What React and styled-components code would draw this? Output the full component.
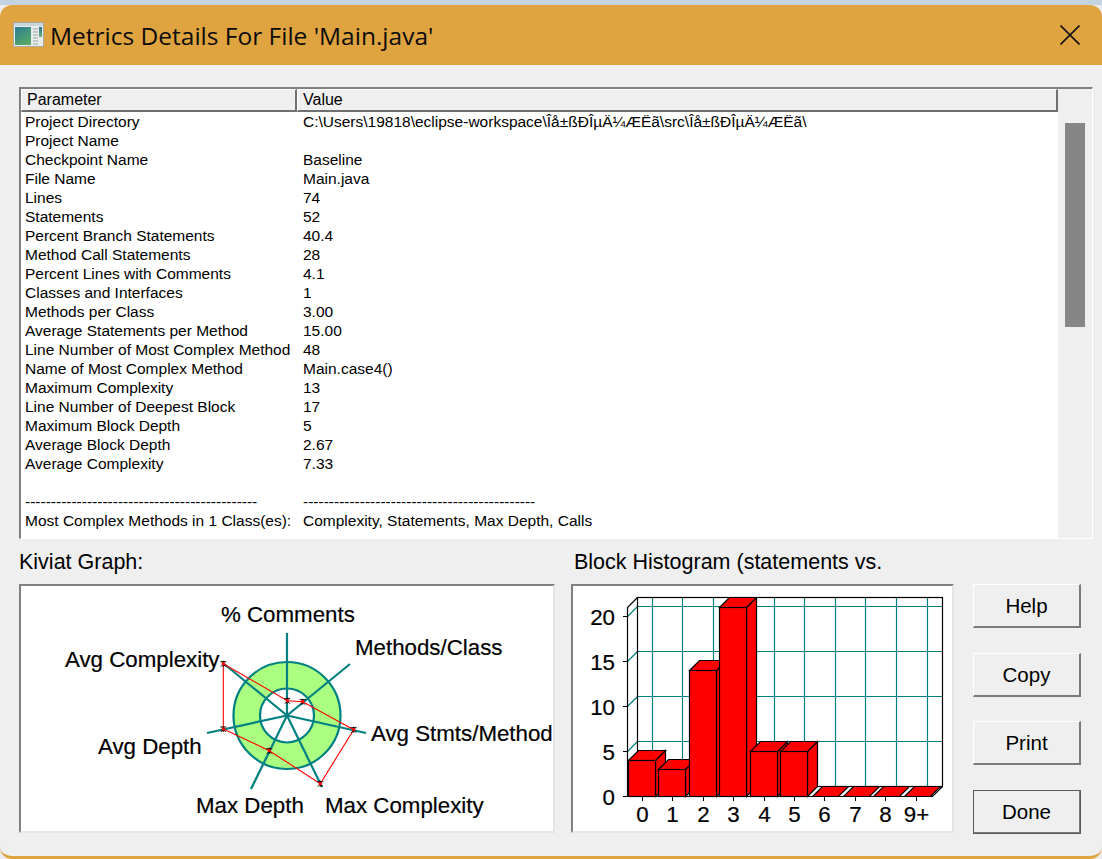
import React from "react";
import styled, { createGlobalStyle } from "styled-components";

const GlobalStyle = createGlobalStyle`
  html, body {
    margin: 0;
    padding: 0;
    height: 859px;
    overflow: hidden;
    background: linear-gradient(#c4d3e0 0 5px, #ececec 5px);
    font-family: "Liberation Sans", Arial, sans-serif;
  }
`;

const Window = styled.div`
  margin-top: 5px;
  width: 1102px;
  height: 854px;
  box-sizing: border-box;
  background: #efefef;
  border-bottom: 3px solid #dfa340;
  border-radius: 12px;
  overflow: hidden;
  display: flex;
  flex-direction: column;
`;

const TitleBar = styled.div`
  height: 60px;
  flex: none;
  background: #dfa340;
  display: flex;
  align-items: center;
  padding: 0 22px 0 13px;
  gap: 5px;
`;

const Title = styled.div`
  flex: 1;
  font-family: "Open Sans", sans-serif;
  font-size: 24.5px;
  color: #0c0c0c;
`;

const Body = styled.div`
  flex: 1;
  padding: 22px 21px 0 19px;
  display: flex;
  flex-direction: column;
`;

const ListBox = styled.div`
  width: 1074px;
  height: 452px;
  box-sizing: border-box;
  border-top: 2px solid #808080;
  border-left: 2px solid #808080;
  border-right: 1px solid #fff;
  border-bottom: 1px solid #fff;
  display: flex;
`;

const ListMain = styled.div`
  width: 1037px;
  background: #fff;
  overflow: hidden;
`;

const ScrollTrack = styled.div`
  flex: 1;
  background: #efefef;
  padding: 34px 7px 0 7px;
`;

const ScrollThumb = styled.div`
  height: 204px;
  background: #868686;
`;

const HeaderRow = styled.div`
  display: grid;
  grid-template-columns: 276px 761px;
  height: 22px;
`;

const HeaderCell = styled.div`
  box-sizing: border-box;
  background: #efefef;
  border-top: 1px solid #fff;
  border-left: 1px solid #fff;
  border-right: 2px solid #707070;
  border-bottom: 2px solid #707070;
  padding-left: ${(p) => p.$pad}px;
  font-size: 16px;
  line-height: 20px;
  color: #000;
`;

const Rows = styled.div`
  padding-top: 1px;
`;

const Row = styled.div`
  display: grid;
  grid-template-columns: 278px 1fr;
  height: 19px;
  line-height: 19px;
  padding-left: 4px;
  font-size: 15.5px;
  color: #000;
  white-space: nowrap;
`;

const Lower = styled.div`
  display: flex;
  margin-top: 0;
`;

const GraphColumn = styled.div`
  width: ${(p) => p.$width}px;
  margin-right: ${(p) => p.$gap}px;
`;

const GraphLabel = styled.div`
  height: 45px;
  line-height: 46px;
  font-size: 21.5px;
  color: #000;
  white-space: nowrap;
  padding-left: ${(p) => p.$pad || 0}px;
`;

const GraphPanel = styled.div`
  height: 249px;
  box-sizing: border-box;
  background: #fff;
  border-top: 2px solid #808080;
  border-left: 2px solid #808080;
  border-right: 2px solid #e4e4e4;
  border-bottom: 2px solid #e4e4e4;
  svg {
    display: block;
  }
`;

const ButtonColumn = styled.div`
  width: 108px;
  padding-top: 45px;
  height: 250px;
  display: flex;
  flex-direction: column;
  justify-content: space-between;
`;

const Button = styled.button`
  width: 108px;
  height: 44px;
  box-sizing: border-box;
  padding: 1px 0 0;
  background: #efefef;
  border-top: 1px solid #fff;
  border-left: 1px solid #fff;
  border-right: 2px solid #7a7a7a;
  border-bottom: 2px solid #7a7a7a;
  outline: ${(p) => (p.$default ? "1px solid #5a5a5a" : "none")};
  outline-offset: -1px;
  font-family: "Liberation Sans", Arial, sans-serif;
  font-size: 20.5px;
  color: #000;
`;

const ChartText = styled.text`
  font-family: "Liberation Sans", Arial, sans-serif;
  font-size: 22.3px;
  fill: #000;
  stroke: #000;
  stroke-width: 0.2px;
`;

const rows = [
  ["Project Directory", "C:\\Users\\19818\\eclipse-workspace\\Îå±ßÐÎµÄ¼ÆËã\\src\\Îå±ßÐÎµÄ¼ÆËã\\"],
  ["Project Name", ""],
  ["Checkpoint Name", "Baseline"],
  ["File Name", "Main.java"],
  ["Lines", "74"],
  ["Statements", "52"],
  ["Percent Branch Statements", "40.4"],
  ["Method Call Statements", "28"],
  ["Percent Lines with Comments", "4.1"],
  ["Classes and Interfaces", "1"],
  ["Methods per Class", "3.00"],
  ["Average Statements per Method", "15.00"],
  ["Line Number of Most Complex Method", "48"],
  ["Name of Most Complex Method", "Main.case4()"],
  ["Maximum Complexity", "13"],
  ["Line Number of Deepest Block", "17"],
  ["Maximum Block Depth", "5"],
  ["Average Block Depth", "2.67"],
  ["Average Complexity", "7.33"],
  ["", ""],
  ["-".repeat(45), "-".repeat(45)],
  ["Most Complex Methods in 1 Class(es):", "Complexity, Statements, Max Depth, Calls"],
];

const TEAL = "#008080";

const axes = [
  [287, 633],
  [350, 664],
  [366, 733],
  [322, 787],
  [251, 789],
  [207, 733],
  [223, 663],
];

const points = [
  [223.3, 663.7],
  [287.3, 700.7],
  [302.7, 701.7],
  [353.7, 729.7],
  [320.3, 783.7],
  [269.3, 750.7],
  [223.3, 729],
];

const kiviatLabels = [
  ["% Comments", 221, 622],
  ["Methods/Class", 355, 655],
  ["Avg Complexity", 65, 667],
  ["Avg Stmts/Method", 371, 741],
  ["Avg Depth", 98, 754],
  ["Max Depth", 196, 813],
  ["Max Complexity", 325, 813],
];

const Kiviat = () => (
  <svg width="532" height="245" viewBox="21 586 532 245">
    <circle cx="287" cy="715.5" r="53.5" fill="#aaff80" stroke={TEAL} strokeWidth="2.2" />
    <circle cx="287" cy="715.5" r="27" fill="#fff" stroke={TEAL} strokeWidth="2.2" />
    {axes.map(([x, y], i) => (
      <line key={i} x1="287" y1="715.5" x2={x} y2={y} stroke={TEAL} strokeWidth="2.2" />
    ))}
    <polygon points={points.map((p) => p.join(",")).join(" ")} fill="none" stroke="#f00" strokeWidth="1.1" />
    {points.map(([x, y], i) => (
      <g key={i}>
        <path d={`M${x - 3} ${y - 2}h6M${x} ${y - 3}v6M${x - 2.5} ${y + 3}l2.5 -2.5l2.5 2.5`} stroke="#000" strokeWidth="1" fill="none" />
        <rect x={x - 1.5} y={y - 1.5} width="3" height="3" fill="#f00" />
      </g>
    ))}
    {kiviatLabels.map(([t, x, y]) => (
      <ChartText key={t} x={x} y={y}>{t}</ChartText>
    ))}
  </svg>
);

const bars = [4, 3, 14, 21, 5, 5, 0, 0, 0, 0];
const xLabels = ["0", "1", "2", "3", "4", "5", "6", "7", "8", "9+"];
const gridX = [652.5, 682.5, 713.5, 744.5, 774.5, 804.5, 835.5, 865.5, 896.5, 927.5];
const baseY = 796.5;
const step = (i) => Math.round(i * 30.4);

const Bar = ({ i, value }) => {
  const x = 628.5 + step(i);
  const w = 27;
  const top = baseY - value * 9;
  if (value === 0) {
    return (
      <polygon
        points={`${x + 2},${baseY} ${x + 12},${baseY - 10} ${x + 38},${baseY - 10} ${x + 28},${baseY}`}
        fill="#f00"
        stroke="#000"
        strokeWidth="1.2"
      />
    );
  }
  return (
    <g stroke="#000" strokeWidth="1.2" fill="#f00">
      <polygon points={`${x + w},${top} ${x + w + 10},${top - 10} ${x + w + 10},${baseY - 10} ${x + w},${baseY}`} />
      <polygon points={`${x},${top} ${x + 10},${top - 10} ${x + w + 10},${top - 10} ${x + w},${top}`} />
      <rect x={x} y={top} width={w} height={baseY - top} />
    </g>
  );
};

const Histogram = () => (
  <svg width="379" height="245" viewBox="573 586 379 245">
    <clipPath id="plot">
      <rect x="573" y="597" width="379" height="240" />
    </clipPath>
    <rect x="637.5" y="597.5" width="305" height="189" fill="#fff" />
    {[0, 5, 10, 15, 20].map((v) => {
      const y = baseY - v * 9;
      return (
        <g key={v} fill="none">
          <line x1="627.5" y1={y} x2="637.5" y2={y - 10} stroke={TEAL} strokeWidth="1.2" />
          <line x1="637.5" y1={y - 10} x2="942.5" y2={y - 10} stroke={TEAL} strokeWidth="1.2" />
          <line x1="623" y1={y} x2="627.5" y2={y} stroke="#000" />
        </g>
      );
    })}
    {gridX.map((x) => (
      <line key={x} x1={x} y1="597.5" x2={x} y2="786.5" stroke={TEAL} strokeWidth="1.2" />
    ))}
    <rect x="637.5" y="597.5" width="305" height="189" fill="none" stroke="#000" strokeWidth="1.2" />
    <path d="M637.5 597.5L627.5 607.5V796.5H932.5L942.5 786.5M637.5 786.5L627.5 796.5" fill="none" stroke="#000" strokeWidth="1.2" />
    <g clipPath="url(#plot)">
      {bars.map((v, i) => (
        <Bar key={i} i={i} value={v} />
      ))}
    </g>
    {xLabels.map((t, i) => (
      <g key={t}>
        <line x1={642.5 + step(i)} y1="796.5" x2={642.5 + step(i)} y2="801" stroke="#000" />
        <ChartText x={642.5 + step(i)} y="822" textAnchor="middle">{t}</ChartText>
      </g>
    ))}
    {[0, 5, 10, 15, 20].map((v) => (
      <ChartText key={v} x="615" y={804.5 - v * 9} textAnchor="end">{v}</ChartText>
    ))}
  </svg>
);

const AppIcon = () => (
  <svg width="32" height="26" viewBox="0 0 32 26">
    <defs>
      <linearGradient id="pane" x1="0" y1="0" x2="0.6" y2="1">
        <stop offset="0" stopColor="#2b7c9a" />
        <stop offset="1" stopColor="#55a866" />
      </linearGradient>
      <linearGradient id="side" x1="0" y1="0" x2="0" y2="1">
        <stop offset="0" stopColor="#2a6f90" />
        <stop offset="1" stopColor="#6fb07a" />
      </linearGradient>
    </defs>
    <rect x="0.5" y="0.5" width="30" height="24" fill="#e9ecec" stroke="#a8a8a0" />
    <rect x="1" y="1" width="29" height="3" fill="#c9d6dc" />
    <rect x="2" y="5" width="16" height="18" fill="url(#pane)" />
    <path d="M20 7h5M20 10h5M20 13h5M20 16h5M20 19h5M20 22h5" stroke="#9aa3a3" strokeWidth="1.1" />
    <rect x="26" y="5" width="3" height="10" fill="url(#side)" />
  </svg>
);

const CloseIcon = () => (
  <svg width="20" height="20" viewBox="0 0 20 20">
    <path d="M0.5 0.5L19.5 19.5M19.5 0.5L0.5 19.5" stroke="#111" strokeWidth="1.6" fill="none" />
  </svg>
);

export default function App() {
  return (
    <>
      <GlobalStyle />
      <Window>
        <TitleBar>
          <AppIcon />
          <Title>Metrics Details For File 'Main.java'</Title>
          <CloseIcon />
        </TitleBar>
        <Body>
          <ListBox>
            <ListMain>
              <HeaderRow>
                <HeaderCell $pad={5}>Parameter</HeaderCell>
                <HeaderCell $pad={5}>Value</HeaderCell>
              </HeaderRow>
              <Rows>
                {rows.map(([name, value], i) => (
                  <Row key={i}>
                    <span>{name}</span>
                    <span>{value}</span>
                  </Row>
                ))}
              </Rows>
            </ListMain>
            <ScrollTrack>
              <ScrollThumb />
            </ScrollTrack>
          </ListBox>
          <Lower>
            <GraphColumn $width={536} $gap={16}>
              <GraphLabel>Kiviat Graph:</GraphLabel>
              <GraphPanel>
                <Kiviat />
              </GraphPanel>
            </GraphColumn>
            <GraphColumn $width={383} $gap={19}>
              <GraphLabel $pad={3}>Block Histogram (statements vs.</GraphLabel>
              <GraphPanel>
                <Histogram />
              </GraphPanel>
            </GraphColumn>
            <ButtonColumn>
              <Button>Help</Button>
              <Button>Copy</Button>
              <Button>Print</Button>
              <Button $default>Done</Button>
            </ButtonColumn>
          </Lower>
        </Body>
      </Window>
    </>
  );
}
